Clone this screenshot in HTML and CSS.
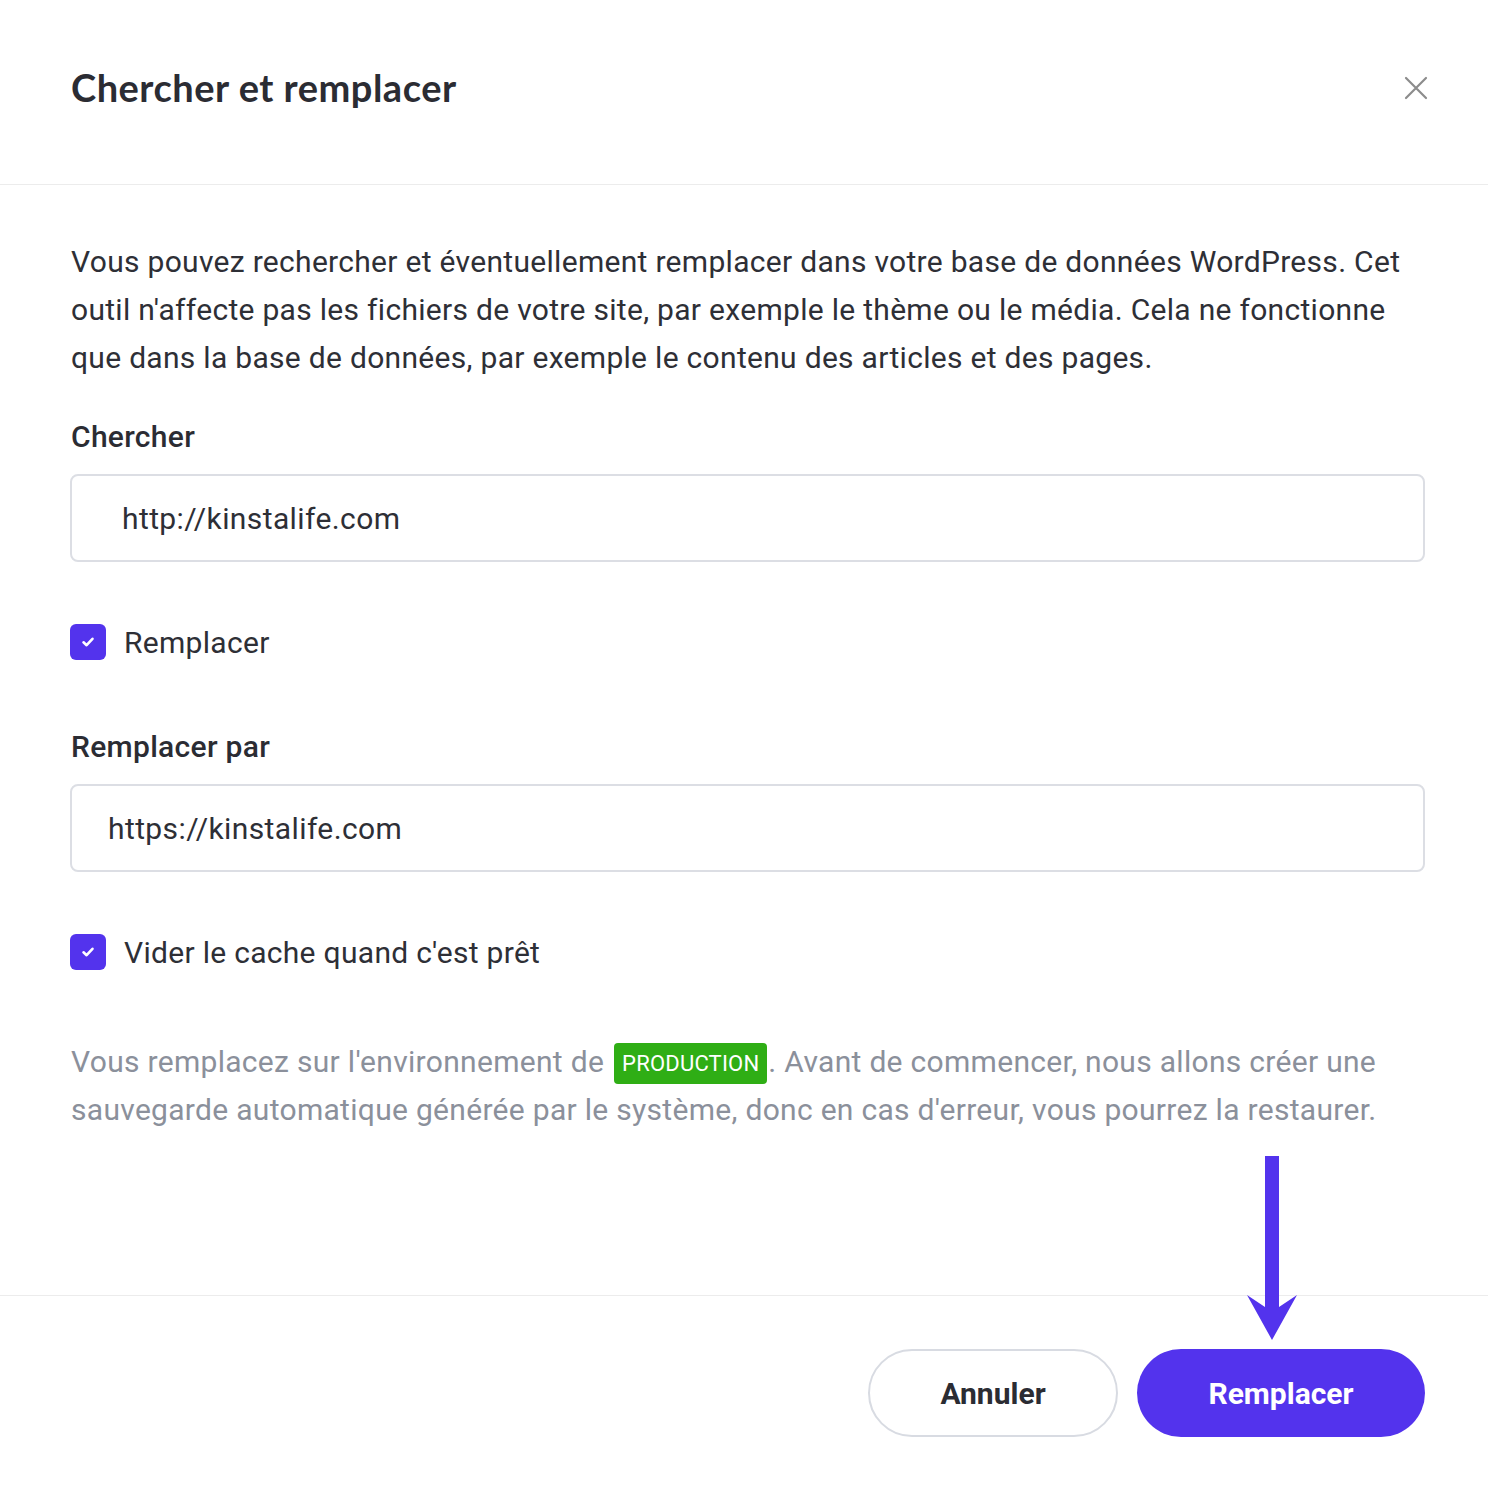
FILE: index.html
```html
<!DOCTYPE html>
<html lang="fr">
<head>
<meta charset="utf-8">
<title>Chercher et remplacer</title>
<link rel="stylesheet" href="styles.css">
</head>
<body>
<div class="modal">
  <header class="modal-header">
    <h1 class="modal-title">Chercher et remplacer</h1>
    <button class="close-btn" aria-label="Fermer">
      <svg width="24" height="24" viewBox="0 0 24 24"><path d="M2 2 L22 22 M22 2 L2 22" stroke="#8c8c8c" stroke-width="2.2" fill="none" stroke-linecap="round"/></svg>
    </button>
  </header>
  <main class="modal-body">
    <p class="intro">Vous pouvez rechercher et éventuellement remplacer dans votre base de données WordPress. Cet outil n'affecte pas les fichiers de votre site, par exemple le thème ou le média. Cela ne fonctionne que dans la base de données, par exemple le contenu des articles et des pages.</p>

    <label class="field-label">Chercher</label>
    <div class="input input-search">http://kinstalife.com</div>

    <div class="check-row">
      <span class="checkbox"><svg width="16" height="16" viewBox="0 0 16 16"><path d="M3.5 8.3 L6.6 11.2 L12.5 4.8" stroke="#fff" stroke-width="2.6" fill="none" stroke-linecap="round" stroke-linejoin="round"/></svg></span>
      <span class="check-label">Remplacer</span>
    </div>

    <label class="field-label label-2">Remplacer par</label>
    <div class="input input-replace">https://kinstalife.com</div>

    <div class="check-row">
      <span class="checkbox"><svg width="16" height="16" viewBox="0 0 16 16"><path d="M3.5 8.3 L6.6 11.2 L12.5 4.8" stroke="#fff" stroke-width="2.6" fill="none" stroke-linecap="round" stroke-linejoin="round"/></svg></span>
      <span class="check-label">Vider le cache quand c'est prêt</span>
    </div>

    <p class="note"><span>Vous remplacez sur l'environnement de</span><span class="badge">PRODUCTION</span><span>. Avant de commencer, nous allons créer une sauvegarde automatique générée par le système, donc en cas d'erreur, vous pourrez la restaurer.</span></p>
  </main>
  <footer class="modal-footer">
    <button class="btn btn-secondary">Annuler</button>
    <button class="btn btn-primary">Remplacer</button>
  </footer>
  <svg class="arrow" width="54" height="186" viewBox="0 0 54 186">
    <rect x="19" y="0" width="14" height="152" fill="#5333ed"/>
    <path d="M1 139 L19 151 L33 151 L51 139 L26 184 Z" fill="#5333ed"/>
  </svg>
</div>
</body>
</html>
```
FILE: styles.css
```css
* { box-sizing: border-box; }
html, body { margin: 0; padding: 0; background: #fff; }
body {
  font-family: Roboto, "Liberation Sans", Arial, sans-serif;
  color: #2e2f36;
  width: 1488px;
  height: 1486px;
  overflow: hidden;
}
.modal {
  position: relative;
  width: 1488px;
  height: 1486px;
  display: flex;
  flex-direction: column;
}
.modal-header {
  height: 185px;
  border-bottom: 1px solid #ececec;
  display: flex;
  align-items: center;
  justify-content: space-between;
  padding: 0 60px 10px 71px;
}
.modal-title {
  margin: 0;
  font-family: Lato, "Open Sans", sans-serif;
  font-weight: 700;
  font-size: 38px;
  letter-spacing: 0.5px;
  color: #2b2c33;
}
.close-btn {
  border: 0;
  background: none;
  padding: 0;
  width: 24px;
  height: 24px;
  display: flex;
  margin-top: 2px;
}
.modal-body {
  flex: 1;
  padding: 53px 63px 0 70px;
  display: flex;
  flex-direction: column;
}
.intro {
  margin: 0 0 0 1px;
  font-size: 30px;
  letter-spacing: 0.3px;
  line-height: 48px;
  color: #2e2f36;
}
.field-label {
  display: block;
  margin: 35px 0 17px 1px;
  font-size: 30px;
  letter-spacing: 0.3px;
  line-height: 40px;
  font-weight: 500;
  color: #2b2c33;
}
.label-2 { margin-top: 67px; }
.input {
  height: 88px;
  border: 2px solid #dcdee4;
  border-radius: 8px;
  display: flex;
  align-items: center;
  font-size: 30px;
  letter-spacing: 0.4px;
  color: #2e2f36;
}
.input-search { padding-left: 50px; }
.input-replace { padding-left: 36px; }
.check-row {
  margin-top: 62px;
  display: flex;
  align-items: center;
  height: 36px;
}
.checkbox {
  width: 36px;
  height: 36px;
  border-radius: 6px;
  background: #5333ed;
  display: flex;
  align-items: center;
  justify-content: center;
}
.check-label {
  margin-left: 18px;
  font-size: 30px;
  letter-spacing: 0.3px;
  color: #2e2f36;
}
.note {
  margin: 68px 0 0 1px;
  font-size: 30px;
  letter-spacing: 0.3px;
  line-height: 48px;
  color: #8b909b;
}
.badge {
  display: inline-block;
  background: #2fae15;
  color: #fff;
  font-size: 22px;
  line-height: 41px;
  height: 41px;
  padding: 0 8px;
  border-radius: 4px;
  vertical-align: 1px;
  letter-spacing: 0.2px;
  margin: 0 1px 0 10px;
}
.modal-footer {
  height: 191px;
  border-top: 1px solid #ececec;
  display: flex;
  justify-content: flex-end;
  align-items: flex-start;
  padding: 53px 63px 0 0;
  gap: 19px;
}
.btn {
  height: 88px;
  border-radius: 44px;
  font-family: Roboto, "Liberation Sans", sans-serif;
  font-size: 30px;
  font-weight: 700;
  cursor: pointer;
}
.btn-secondary {
  width: 250px;
  background: #fff;
  border: 2px solid #d8dbe2;
  color: #2b2c33;
}
.btn-primary {
  width: 288px;
  background: #5333ed;
  border: 0;
  color: #fff;
}
.arrow {
  position: absolute;
  left: 1246px;
  top: 1156px;
}
```
